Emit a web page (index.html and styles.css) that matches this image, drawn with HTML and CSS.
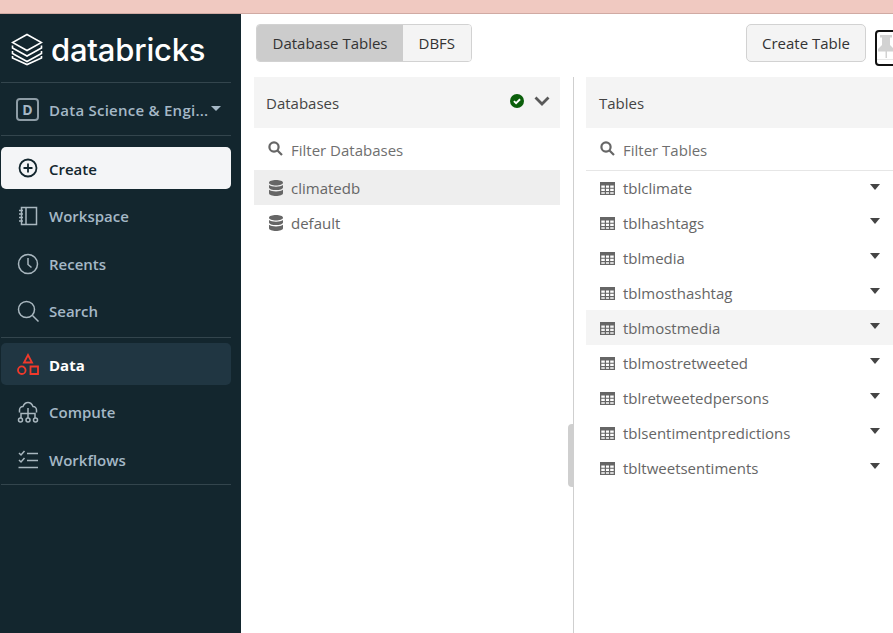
FILE: index.html
```html
<!DOCTYPE html>
<html lang="en">
<head>
  <meta charset="UTF-8">
  <title>Data - Databricks</title>
  <link rel="stylesheet" href="styles.css">
</head>
<body>
  <div class="top-strip"></div>
  <div class="shell">
    <nav class="sidebar">
      <div class="logo">
        <svg class="logo-mark" width="32" height="33" viewBox="0 0 32 33" fill="none" stroke="#fff" stroke-width="1.6">
          <path d="M16 1.500 30.500 9.500 16 17.500 1.500 9.500Z"/>
          <path d="M1.500 12.500v2.500L16 23l14.500-8v-2.500"/>
          <path d="M1.500 18v2.500L16 28.500l14.500-8V18"/>
          <path d="M1.500 23v2L16 31.500l14.500-6.500v-2"/>
        </svg>
        <span class="logo-text">databricks</span>
      </div>
      <div class="persona">
        <span class="persona-badge">D</span>
        <span class="persona-name">Data Science &amp; Engi...</span>
        <span class="persona-caret"></span>
      </div>
      <div class="nav-group nav-group-first">
        <a class="nav-item nav-create">
          <svg width="22" height="22" viewBox="0 0 22 22" fill="none" stroke="#13262e" stroke-width="1.800"><circle cx="11" cy="11" r="8.500"/><path d="M11 6.500v9M6.500 11h9"/></svg>
          Create
        </a>
        <a class="nav-item">
          <svg width="22" height="22" viewBox="0 0 22 22" fill="none" stroke="#a9b7bf" stroke-width="1.500"><path d="M4.500 2.500h15v17h-15zM9 2.500v17M2 5.500h4M2 9h4M2 12.500h4M2 16h4"/></svg>
          Workspace
        </a>
        <a class="nav-item">
          <svg width="22" height="22" viewBox="0 0 22 22" fill="none" stroke="#a9b7bf" stroke-width="1.500"><circle cx="11" cy="11" r="9.500"/><path d="M11 5v6.500l3.500 3"/></svg>
          Recents
        </a>
        <a class="nav-item">
          <svg width="22" height="22" viewBox="0 0 22 22" fill="none" stroke="#a9b7bf" stroke-width="1.500"><circle cx="9.500" cy="9.500" r="8"/><path d="m15.500 15.500 6 6"/></svg>
          Search
        </a>
      </div>
      <div class="nav-group nav-group-second">
        <a class="nav-item nav-active">
          <svg width="22" height="22" viewBox="0 0 22 22" fill="none" stroke="#f0392b" stroke-width="1.800"><path d="M11 2 15 9.500H7zM13.500 13.500h7.500v7.500h-7.500z"/><circle cx="4.800" cy="17.200" r="3.800"/></svg>
          Data
        </a>
        <a class="nav-item nav-compute">
          <svg width="22" height="22" viewBox="0 0 22 22" fill="none" stroke="#a9b7bf" stroke-width="1.500"><path d="M2.500 11.500V9a3.500 3.500 0 0 1 3.500-3.500C7 3 9 1.500 11 1.500S15 3 16 5.500A3.500 3.500 0 0 1 19.500 9v2.500M11 7v10M4 17v-4.500h14V17"/><circle cx="3.500" cy="19" r="2"/><circle cx="11" cy="19" r="2"/><circle cx="18.500" cy="19" r="2"/></svg>
          Compute
        </a>
        <a class="nav-item">
          <svg width="22" height="22" viewBox="0 0 22 22" fill="none" stroke="#a9b7bf" stroke-width="1.500"><path d="m2 4 2 2 3.500-4M2 11l2 2 3.500-4M10 4.500h11M10 11.500h11M1.500 18.500H21"/></svg>
          Workflows
        </a>
      </div>
    </nav>

    <main class="main">
      <div class="toolbar">
        <div class="tabs">
          <button class="tab tab-active">Database Tables</button>
          <button class="tab">DBFS</button>
        </div>
        <div class="toolbar-right">
          <button class="create-table">Create Table</button>
          <span class="pin">
            <svg width="18" height="30" viewBox="0 0 18 30" fill="#d2d2d2"><path d="M3 3h12v2.500h-2V13l4 4v2.500H1V17l4-4V5.500H3z"/><path d="M8.500 19H10v7H8.500zM0 27.500h18v.5H0z"/></svg>
          </span>
        </div>
      </div>

      <div class="panels">
        <section class="panel panel-db">
          <header class="panel-head">
            <span>Databases</span>
            <span class="panel-status">
              <svg width="14" height="14" viewBox="0 0 15 15"><circle cx="7.500" cy="7.500" r="7.500" fill="#0b5f0b"/><path d="m4.200 7.600 2.300 2.300 4.300-4.300" fill="none" stroke="#fff" stroke-width="2"/></svg>
              <svg width="16" height="10" viewBox="0 0 16 10" fill="none" stroke="#595959" stroke-width="2.800"><path d="m1.500 1.500 6.500 6.500 6.500-6.500"/></svg>
            </span>
          </header>
          <div class="filter">
            <svg class="search-icon" width="15" height="15" viewBox="0 0 15 15" fill="none" stroke="#666" stroke-width="2.200"><circle cx="6" cy="6" r="4.600"/><path d="m9.500 9.500 4.500 4.500"/></svg>
            Filter Databases
          </div>
          <ul class="rows">
            <li class="row row-selected"><svg class="db-icon" width="14" height="16"><use href="#db"/></svg>climatedb</li>
            <li class="row"><svg class="db-icon" width="14" height="16"><use href="#db"/></svg>default</li>
          </ul>
        </section>

        <div class="divider"><span class="drag-handle"></span></div>

        <section class="panel panel-tables">
          <header class="panel-head"><span>Tables</span></header>
          <div class="filter">
            <svg class="search-icon" width="15" height="15" viewBox="0 0 15 15" fill="none" stroke="#666" stroke-width="2.200"><circle cx="6" cy="6" r="4.600"/><path d="m9.500 9.500 4.500 4.500"/></svg>
            Filter Tables
          </div>
          <ul class="rows">
            <li class="row"><svg class="tbl-icon" width="15" height="13"><use href="#tbl"/></svg><span class="row-name">tblclimate</span><i class="row-caret"></i></li>
            <li class="row"><svg class="tbl-icon" width="15" height="13"><use href="#tbl"/></svg><span class="row-name">tblhashtags</span><i class="row-caret"></i></li>
            <li class="row"><svg class="tbl-icon" width="15" height="13"><use href="#tbl"/></svg><span class="row-name">tblmedia</span><i class="row-caret"></i></li>
            <li class="row"><svg class="tbl-icon" width="15" height="13"><use href="#tbl"/></svg><span class="row-name">tblmosthashtag</span><i class="row-caret"></i></li>
            <li class="row row-hover"><svg class="tbl-icon" width="15" height="13"><use href="#tbl"/></svg><span class="row-name">tblmostmedia</span><i class="row-caret"></i></li>
            <li class="row"><svg class="tbl-icon" width="15" height="13"><use href="#tbl"/></svg><span class="row-name">tblmostretweeted</span><i class="row-caret"></i></li>
            <li class="row"><svg class="tbl-icon" width="15" height="13"><use href="#tbl"/></svg><span class="row-name">tblretweetedpersons</span><i class="row-caret"></i></li>
            <li class="row"><svg class="tbl-icon" width="15" height="13"><use href="#tbl"/></svg><span class="row-name">tblsentimentpredictions</span><i class="row-caret"></i></li>
            <li class="row"><svg class="tbl-icon" width="15" height="13"><use href="#tbl"/></svg><span class="row-name">tbltweetsentiments</span><i class="row-caret"></i></li>
          </ul>
        </section>
      </div>
    </main>
  </div>

  <svg class="icon-defs" width="0" height="0">
    <symbol id="db" viewBox="0 0 14 16">
      <path fill="#666" d="M7 0c3.600 0 7 1 7 2.700S10.600 5.400 7 5.400 0 4.400 0 2.700 3.400 0 7 0zM0 5c1.500 1.200 4 1.700 7 1.700S12.500 6.200 14 5v2.400C14 9 10.600 10 7 10S0 9 0 7.400zM0 9.700c1.500 1.200 4 1.700 7 1.700s5.500-.5 7-1.700v3.600C14 15 10.600 16 7 16s-7-1-7-2.700z"/>
    </symbol>
    <symbol id="tbl" viewBox="0 0 15 13">
      <path fill="#666" d="M0 0h15v13H0zM1.300 3.400v2.300h3.500V3.400zm4.700 0v2.300h3V3.400zm4.200 0v2.300h3.500V3.400zM1.300 6.800v2.300h3.500V6.800zm4.700 0v2.300h3V6.800zm4.200 0v2.300h3.500V6.800zM1.300 10.200v1.600h3.500v-1.600zm4.700 0v1.600h3v-1.600zm4.200 0v1.600h3.500v-1.600z" fill-rule="evenodd"/>
    </symbol>
  </svg>
</body>
</html>
```

FILE: styles.css
```css
* {
  box-sizing: border-box;
}
html, body {
  height: 100%;
}
body {
  margin: 0;
  display: flex;
  flex-direction: column;
  overflow: hidden;
  font-family: "Open Sans", "Noto Sans", Arial, sans-serif;
  font-size: 15px;
  color: #333;
  background-color: #fff;
}
.top-strip {
  height: 14px;
  flex: none;
  background-color: #f0c9c1;
  border-bottom: 1px solid #d0aaa3;
}
.shell {
  flex: 1;
  display: flex;
  min-height: 0;
}
.icon-defs {
  position: absolute;
}

/* sidebar */
.sidebar {
  width: 241px;
  flex: none;
  padding: 0 10px 0 1px;
  background-color: #13262e;
  color: #a5b8c6;
}
.logo {
  height: 69px;
  display: flex;
  align-items: center;
  gap: 8px;
  padding: 3px 0 0 10px;
  border-bottom: 1px solid #33454d;
}
.logo-text {
  font-family: Inter, "Open Sans", sans-serif;
  font-size: 31px;
  font-weight: 500;
  letter-spacing: -0.2px;
  color: #fff;
}
.persona {
  height: 53px;
  display: flex;
  align-items: center;
  padding: 2px 0 0 15px;
  border-bottom: 1px solid #33454d;
  font-weight: 600;
  letter-spacing: 0.25px;
  white-space: nowrap;
}
.persona-badge {
  width: 23px;
  height: 23px;
  margin: -1px 10px 0 0;
  border: 2px solid #8d9ca5;
  border-radius: 4px;
  text-align: center;
  line-height: 19px;
  font-size: 14px;
  font-weight: 700;
}
.persona-caret {
  margin: -4px 0 0 3px;
  border-left: 5px solid transparent;
  border-right: 5px solid transparent;
  border-top: 5px solid #a5b8c6;
}
.nav-group {
  padding: 5px 0 3px;
}
.nav-group-second {
  border-top: 1px solid #33454d;
  border-bottom: 1px solid #33454d;
}
.nav-group-first {
  padding: 11px 0 5px;
}
.nav-item {
  height: 42px;
  margin-bottom: 5.500px;
  display: flex;
  align-items: center;
  gap: 10px;
  padding-left: 16px;
  border-radius: 5px;
  font-weight: 600;
}
.nav-item:last-child {
  margin-bottom: 0;
}
.nav-create {
  padding-top: 2px;
  background-color: #f4f5f7;
  color: #13262e;
  margin-bottom: 6px;
}
.nav-active {
  padding-top: 2px;
  margin-bottom: 6px;
  background-color: #203642;
  color: #fff;
  font-weight: 700;
}
.nav-create svg,
.nav-active svg {
  margin-top: -2px;
}
.nav-compute {
  margin-bottom: 6px;
}

/* main area */
.main {
  flex: 1;
  min-width: 0;
  overflow: hidden;
}
.toolbar {
  height: 63px;
  display: flex;
  justify-content: space-between;
  align-items: flex-start;
  padding: 10px 0 0 15px;
}
.tabs {
  display: flex;
  height: 38px;
  border: 1px solid #d2d2d2;
  border-radius: 4px;
  overflow: hidden;
}
.tab {
  padding: 0 15.500px;
  border: 0;
  background-color: #f4f4f4;
  font: inherit;
  color: #333;
}
.tab-active {
  background-color: #cccccc;
}
.toolbar-right {
  width: 147px;
  flex: none;
  display: flex;
  gap: 9px;
}
.create-table {
  width: 120px;
  height: 38px;
  flex: none;
  padding: 0;
  border: 1px solid #d2d2d2;
  border-radius: 5px;
  background-color: #f4f4f4;
  font: inherit;
  color: #333;
}
.pin {
  width: 30px;
  height: 36px;
  flex: none;
  margin-top: 6px;
  border: 2px solid #111;
  border-radius: 4px;
  overflow: hidden;
}
.pin svg {
  display: block;
}
.panels {
  display: flex;
  height: 556px;
  padding-left: 13px;
}
.panel-db {
  width: 306px;
  flex: none;
}
.panel-tables {
  width: 320px;
  flex: none;
}
.divider {
  position: relative;
  width: 1px;
  flex: none;
  margin: 0 12px 0 13px;
  background-color: #cfcfcf;
}
.drag-handle {
  position: absolute;
  top: 347px;
  left: -5px;
  width: 5px;
  height: 63px;
  border-radius: 4px 0 0 4px;
  background-color: #cfcfcf;
}
.panel-head {
  height: 51px;
  display: flex;
  justify-content: space-between;
  align-items: center;
  padding: 0 10px 0 12px;
  background-color: #f4f4f4;
  color: #444;
}
.panel-tables .panel-head {
  padding-left: 13px;
}
.panel-status {
  display: flex;
  align-items: center;
  gap: 10px;
  margin-top: -3px;
}
.filter {
  height: 42px;
  display: flex;
  align-items: center;
  padding: 1px 0 0 14px;
  color: #6f6f6f;
}
.search-icon {
  margin: -2px 8px 0 0;
  flex: none;
}
.rows {
  margin: 0;
  padding: 0;
  list-style: none;
}
.row {
  height: 35px;
  display: flex;
  align-items: center;
  padding: 0 26px 0 15px;
  color: #666;
}
.panel-tables .row {
  padding-left: 14px;
}
.panel-tables .row:first-child {
  border-top: 1px solid #e6e6e6;
}
.row-selected {
  background-color: #eeeeee;
}
.row-hover {
  background-color: #f4f4f4;
}
.db-icon {
  flex: none;
  margin: 1px 8px 0 0;
}
.tbl-icon {
  flex: none;
  margin: 1px 8px 0 0;
}
.row-name {
  flex: 1;
}
.row-caret {
  margin-top: -3px;
  border-left: 5px solid transparent;
  border-right: 5px solid transparent;
  border-top: 6px solid #444;
}
```
